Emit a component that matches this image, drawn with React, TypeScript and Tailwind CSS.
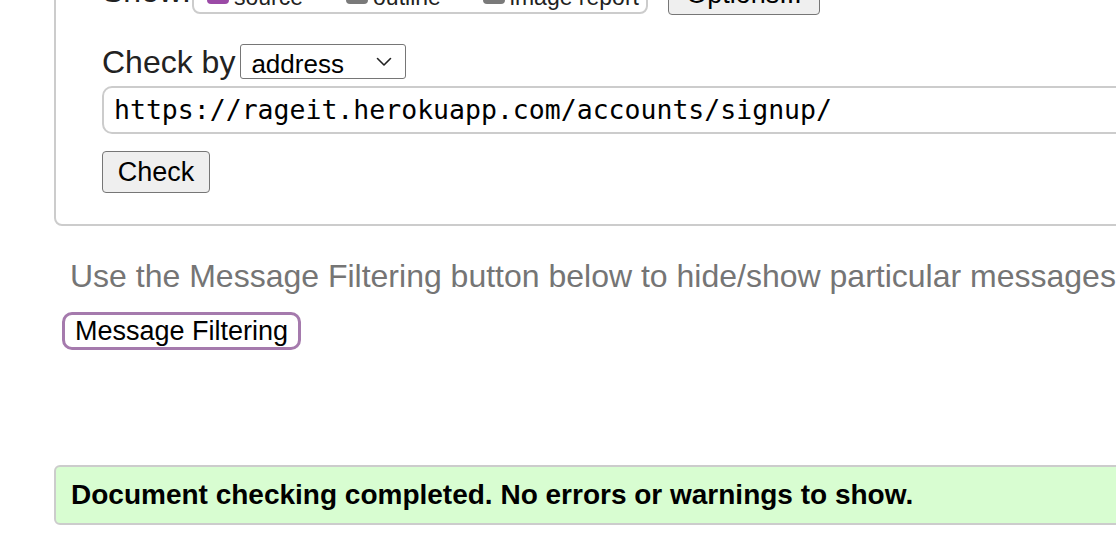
import React from 'react';

const sans = "font-['Liberation_Sans',Arial,sans-serif]";

const Box: React.FC<{ checked?: boolean; label: string; className?: string }> = ({ checked, label, className }) => (
  <label className={`flex items-center gap-[5px] whitespace-nowrap ${className ?? ''}`}>
    <span
      className={
        checked
          ? 'w-[22px] h-[22px] mb-[8px] rounded-[4px] bg-[#9b4aa6]'
          : 'w-[22px] h-[22px] mb-[8px] rounded-[4px] bg-[#7a7a7a]'
      }
    />
    <span>{label}</span>
  </label>
);

const App: React.FC = () => {
  return (
    <div className={`w-[1116px] h-[548px] overflow-hidden bg-white text-[#222] ${sans}`}>
      {/* Checker form box */}
      <div className="ml-[54px] mt-[-58px] w-[1200px] border-2 border-[#cccccc] rounded-[8px] pl-[46px] pt-[16px] pb-[31px]">
        {/* Show row (mostly scrolled off) */}
        <div className="flex items-start h-[56px] whitespace-nowrap">
          <span className="text-[32px] leading-[36px] mt-[13px] w-[90px]">Show:</span>
          <div className="flex items-center w-[456px] h-[34px] mt-[20px] border-2 border-[#cccccc] rounded-[8px] pl-[13px] text-[23px] leading-[26px]">
            <Box checked label="source" />
            <Box label="outline" className="ml-[43px]" />
            <Box label="image report" className="ml-[42px]" />
          </div>
          <button className="ml-[20px] mt-[13px] w-[152px] h-[42px] bg-[#efefef] border border-[#767676] rounded-[4px] text-[27px] text-black">
            Options...
          </button>
        </div>

        {/* Check by */}
        <div className="flex items-center mt-[28px] h-[35px]">
          <span className="text-[32px] text-[#222] mr-[5px]">Check by</span>
          <div className="relative">
            <select
              defaultValue="address"
              className="appearance-none w-[166px] h-[35px] border border-[#767676] rounded-[3px] bg-white pl-[10px] text-[26px] text-black outline-none"
            >
              <option value="address">address</option>
              <option value="file">file upload</option>
              <option value="text">text input</option>
            </select>
            <svg className="absolute right-[14px] top-[13px] pointer-events-none" width="16" height="10" viewBox="0 0 16 10" fill="none">
              <path d="M1.5 1.5 L8 8 L14.5 1.5" stroke="#222" strokeWidth="1.6" strokeLinecap="round" strokeLinejoin="round" />
            </svg>
          </div>
        </div>

        {/* URL input */}
        <div className="mt-[7px] h-[48px] w-full border-2 border-[#cccccc] rounded-[10px] flex items-center pl-[10px]">
          <span className="font-['DejaVu_Sans_Mono',monospace] text-[26.5px] text-black whitespace-nowrap">
            https://rageit.herokuapp.com/accounts/signup/
          </span>
        </div>

        {/* Check button */}
        <button className="mt-[17px] w-[108px] h-[42px] bg-[#efefef] border border-[#767676] rounded-[4px] text-[27px] text-black">
          Check
        </button>
      </div>

      {/* Filtering note */}
      <p className="ml-[70px] mt-[32px] text-[32px] leading-[36px] text-[#757575] whitespace-nowrap">
        Use the Message Filtering button below to hide/show particular messages, and to see total counts of errors and warnings.
      </p>
      <button className="ml-[62px] mt-[18px] h-[38px] px-[10px] border-[3px] border-[#a57aad] rounded-[10px] text-[27px] text-black bg-white leading-none">
        Message Filtering
      </button>

      {/* Result */}
      <div className="ml-[54px] mt-[115px] w-[1200px] h-[60px] border-2 border-[#cccccc] rounded-[6px] bg-[#d8fdd1] flex items-center pl-[15px]">
        <span className="font-bold text-[28px] text-black whitespace-nowrap">
          Document checking completed. No errors or warnings to show.
        </span>
      </div>
    </div>
  );
};

export default App;
